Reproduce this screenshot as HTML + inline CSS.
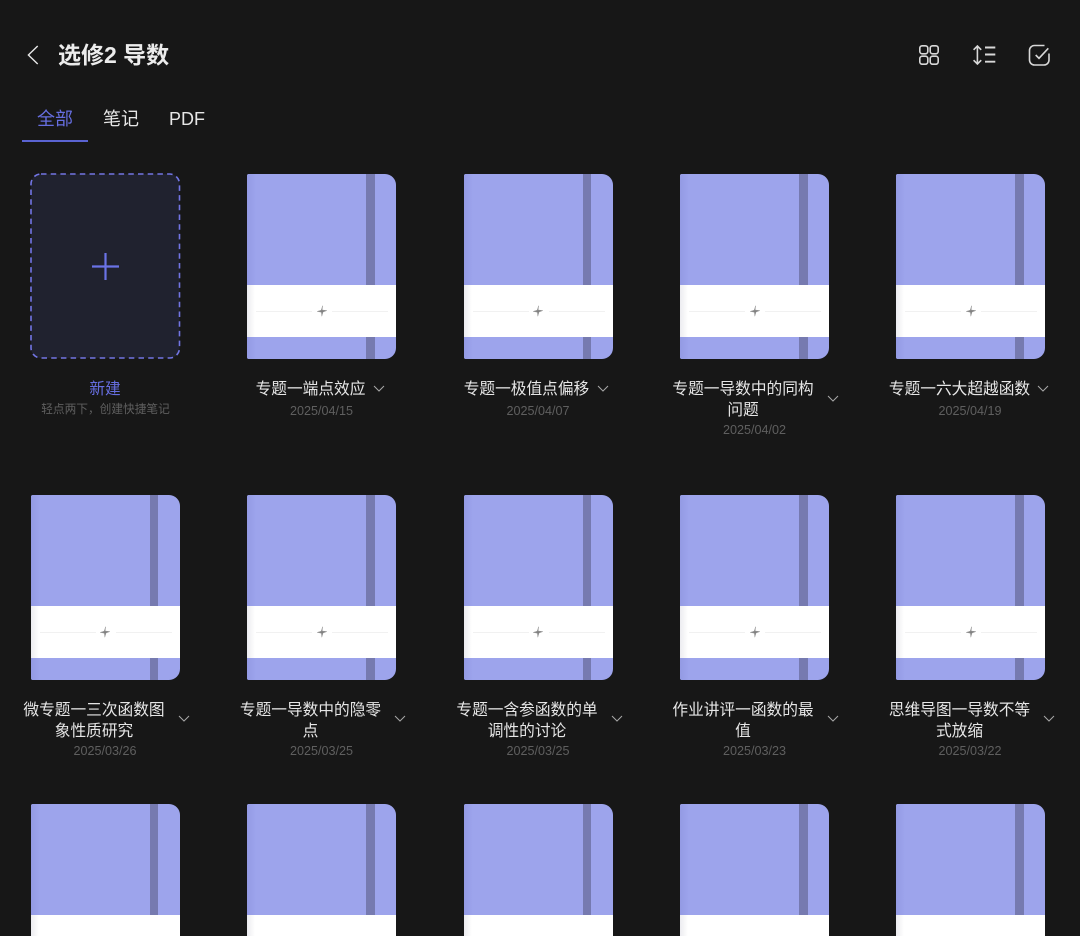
<!DOCTYPE html>
<html lang="zh"><head><meta charset="utf-8"><title>选修2 导数</title>
<style>
html,body{margin:0;padding:0;background:#171717;width:1080px;height:936px;overflow:hidden}
#p{position:relative;width:1080px;height:936px;overflow:hidden;font-family:"Liberation Sans","Noto Sans CJK SC",sans-serif}
.a{position:absolute;white-space:nowrap}
.b{position:absolute;width:149px;height:185px;background:#9da4ec;border-radius:2px 11px 11px 2px;overflow:hidden}
.b.r3{height:132px;border-radius:2px 11px 0 0}
.b i{position:absolute;display:block}
.b .s{left:0;top:0;width:9px;height:100%;background:linear-gradient(90deg,#939ae4,#9da4ec)}
.b .k{left:119px;top:0;width:8.5px;height:100%;background:#767ab0}
.b .w{left:0;top:111px;width:100%;height:52px;background:linear-gradient(90deg,#ececf0,#fff 8px)}
.b .l1{left:9px;top:137px;width:56px;height:1px;background:#f1f1f1}
.b .l2{left:85px;top:137px;width:56px;height:1px;background:#f1f1f1}
.b svg{position:absolute;left:68.5px;top:131px}
.t{position:absolute;transform:translateX(-50%);text-align:center;color:#e6e6e6;font-size:15.7px;line-height:21px;white-space:nowrap}
.d{position:absolute;transform:translateX(-50%);color:#5f5f5f;font-size:12.6px;line-height:16px;white-space:nowrap;font-family:"Liberation Sans",sans-serif}
.c{position:absolute;width:12px;height:7px}
</style></head><body><div id="p">

<svg class="a" style="left:24px;top:42px" width="18" height="26" viewBox="0 0 18 26"><path d="M13.7 4 4.4 13l9.3 9" fill="none" stroke="#e8e8e8" stroke-width="1.4"/></svg>
<div class="a" style="left:58px;top:39px;font-size:23px;line-height:32px;font-weight:700;color:#ececec">选修2 导数</div>

<svg class="a" style="left:915px;top:41px" width="28" height="28" viewBox="0 0 28 28" fill="none" stroke="#d8d8d8" stroke-width="1.6">
<rect x="4.8" y="4.8" width="8" height="8" rx="2.4"/><rect x="15.2" y="4.8" width="8" height="8" rx="2.4"/><rect x="4.8" y="15.2" width="8" height="8" rx="2.4"/><rect x="15.2" y="15.2" width="8" height="8" rx="2.4"/></svg>
<svg class="a" style="left:970px;top:41px" width="28" height="28" viewBox="0 0 28 28" fill="none" stroke="#d8d8d8" stroke-width="1.6">
<path d="M7.4 5v18M3.6 8.8 7.4 5l3.8 3.8M3.6 19.2 7.4 23l3.8-3.8"/><path d="M15 6.5h10.3M15 13.5h10.3M15 20.7h10.3" stroke-width="1.9"/></svg>
<svg class="a" style="left:1025px;top:41px" width="28" height="28" viewBox="0 0 28 28" fill="none" stroke="#d8d8d8" stroke-width="1.6">
<path d="M19.5 4.5H9.5a5 5 0 0 0-5 5v9.5a5 5 0 0 0 5 5h9.5a5 5 0 0 0 5-5v-6.5"/><path d="M10.7 14l3.3 3.3 9.3-10"/></svg>

<div class="a" style="left:37px;top:106px;font-size:18px;line-height:26px;color:#666ee0">全部</div>
<div class="a" style="left:103px;top:106px;font-size:18px;line-height:26px;color:#e6e6e6">笔记</div>
<div class="a" style="left:169px;top:106px;font-size:18px;line-height:26px;color:#e6e6e6">PDF</div>
<div class="a" style="left:21.5px;top:140px;width:66px;height:1.5px;background:#5a63d2"></div>

<svg class="a" style="left:30px;top:173px" width="151" height="186" viewBox="0 0 151 186">
<rect x="1" y="1" width="148.5" height="184" rx="10" fill="#20222f" stroke="#7275e4" stroke-width="1.6" stroke-dasharray="5.5 4.2"/>
<path d="M75.5 80v27M62 93.5h27" stroke="#6a73e6" stroke-width="2.2" fill="none"/></svg>
<div class="t" style="left:105px;top:379px;color:#666ee0">新建</div>
<div class="d" style="left:105.5px;top:402px;font-size:11.7px;font-family:'Liberation Sans','Noto Sans CJK SC',sans-serif;color:#5f5f5f">轻点两下，创建快捷笔记</div>

<!-- row 1 -->
<div class="b" style="left:247px;top:174px"><i class="s"></i><i class="k"></i><i class="w"></i><i class="l1"></i><i class="l2"></i><svg width="12" height="12" viewBox="0 0 12 12"><path d="M6.6.8 6.2 5 10.8 5.6 7 7 5.8 11.2 5.4 7.2 1.2 6.4 5.2 5.2Z" fill="#808080" stroke="#9a9a9a" stroke-width=".5"/></svg></div>
<div class="b" style="left:463.5px;top:174px"><i class="s"></i><i class="k"></i><i class="w"></i><i class="l1"></i><i class="l2"></i><svg width="12" height="12" viewBox="0 0 12 12"><path d="M6.6.8 6.2 5 10.8 5.6 7 7 5.8 11.2 5.4 7.2 1.2 6.4 5.2 5.2Z" fill="#808080" stroke="#9a9a9a" stroke-width=".5"/></svg></div>
<div class="b" style="left:680px;top:174px"><i class="s"></i><i class="k"></i><i class="w"></i><i class="l1"></i><i class="l2"></i><svg width="12" height="12" viewBox="0 0 12 12"><path d="M6.6.8 6.2 5 10.8 5.6 7 7 5.8 11.2 5.4 7.2 1.2 6.4 5.2 5.2Z" fill="#808080" stroke="#9a9a9a" stroke-width=".5"/></svg></div>
<div class="b" style="left:896px;top:174px"><i class="s"></i><i class="k"></i><i class="w"></i><i class="l1"></i><i class="l2"></i><svg width="12" height="12" viewBox="0 0 12 12"><path d="M6.6.8 6.2 5 10.8 5.6 7 7 5.8 11.2 5.4 7.2 1.2 6.4 5.2 5.2Z" fill="#808080" stroke="#9a9a9a" stroke-width=".5"/></svg></div>

<div class="t" style="left:310.5px;top:379px">专题一端点效应</div>
<div class="t" style="left:526.5px;top:379px">专题一极值点偏移</div>
<div class="t" style="left:743px;top:379px">专题一导数中的同构<br>问题</div>
<div class="t" style="left:959.5px;top:379px">专题一六大超越函数</div>
<div class="d" style="left:321.5px;top:403px">2025/04/15</div>
<div class="d" style="left:538px;top:403px">2025/04/07</div>
<div class="d" style="left:754.5px;top:422px">2025/04/02</div>
<div class="d" style="left:970px;top:403px">2025/04/19</div>
<svg class="c" style="left:373px;top:385px" viewBox="0 0 12 7"><path d="M1 1l5 5 5-5" fill="none" stroke="#a8a8a8" stroke-width="1"/></svg>
<svg class="c" style="left:597px;top:385px" viewBox="0 0 12 7"><path d="M1 1l5 5 5-5" fill="none" stroke="#a8a8a8" stroke-width="1"/></svg>
<svg class="c" style="left:827px;top:395px" viewBox="0 0 12 7"><path d="M1 1l5 5 5-5" fill="none" stroke="#a8a8a8" stroke-width="1"/></svg>
<svg class="c" style="left:1037px;top:385px" viewBox="0 0 12 7"><path d="M1 1l5 5 5-5" fill="none" stroke="#a8a8a8" stroke-width="1"/></svg>

<!-- row 2 -->
<div class="b" style="left:30.5px;top:494.5px"><i class="s"></i><i class="k"></i><i class="w"></i><i class="l1"></i><i class="l2"></i><svg width="12" height="12" viewBox="0 0 12 12"><path d="M6.6.8 6.2 5 10.8 5.6 7 7 5.8 11.2 5.4 7.2 1.2 6.4 5.2 5.2Z" fill="#808080" stroke="#9a9a9a" stroke-width=".5"/></svg></div>
<div class="b" style="left:247px;top:494.5px"><i class="s"></i><i class="k"></i><i class="w"></i><i class="l1"></i><i class="l2"></i><svg width="12" height="12" viewBox="0 0 12 12"><path d="M6.6.8 6.2 5 10.8 5.6 7 7 5.8 11.2 5.4 7.2 1.2 6.4 5.2 5.2Z" fill="#808080" stroke="#9a9a9a" stroke-width=".5"/></svg></div>
<div class="b" style="left:463.5px;top:494.5px"><i class="s"></i><i class="k"></i><i class="w"></i><i class="l1"></i><i class="l2"></i><svg width="12" height="12" viewBox="0 0 12 12"><path d="M6.6.8 6.2 5 10.8 5.6 7 7 5.8 11.2 5.4 7.2 1.2 6.4 5.2 5.2Z" fill="#808080" stroke="#9a9a9a" stroke-width=".5"/></svg></div>
<div class="b" style="left:680px;top:494.5px"><i class="s"></i><i class="k"></i><i class="w"></i><i class="l1"></i><i class="l2"></i><svg width="12" height="12" viewBox="0 0 12 12"><path d="M6.6.8 6.2 5 10.8 5.6 7 7 5.8 11.2 5.4 7.2 1.2 6.4 5.2 5.2Z" fill="#808080" stroke="#9a9a9a" stroke-width=".5"/></svg></div>
<div class="b" style="left:896px;top:494.5px"><i class="s"></i><i class="k"></i><i class="w"></i><i class="l1"></i><i class="l2"></i><svg width="12" height="12" viewBox="0 0 12 12"><path d="M6.6.8 6.2 5 10.8 5.6 7 7 5.8 11.2 5.4 7.2 1.2 6.4 5.2 5.2Z" fill="#808080" stroke="#9a9a9a" stroke-width=".5"/></svg></div>

<div class="t" style="left:94px;top:699.5px">微专题一三次函数图<br>象性质研究</div>
<div class="t" style="left:310.5px;top:699.5px">专题一导数中的隐零<br>点</div>
<div class="t" style="left:527px;top:699.5px">专题一含参函数的单<br>调性的讨论</div>
<div class="t" style="left:743px;top:699.5px">作业讲评一函数的最<br>值</div>
<div class="t" style="left:959.5px;top:699.5px">思维导图一导数不等<br>式放缩</div>
<div class="d" style="left:105px;top:743px">2025/03/26</div>
<div class="d" style="left:321.5px;top:743px">2025/03/25</div>
<div class="d" style="left:538px;top:743px">2025/03/25</div>
<div class="d" style="left:754.5px;top:743px">2025/03/23</div>
<div class="d" style="left:970px;top:743px">2025/03/22</div>
<svg class="c" style="left:178px;top:715px" viewBox="0 0 12 7"><path d="M1 1l5 5 5-5" fill="none" stroke="#a8a8a8" stroke-width="1"/></svg>
<svg class="c" style="left:394px;top:715px" viewBox="0 0 12 7"><path d="M1 1l5 5 5-5" fill="none" stroke="#a8a8a8" stroke-width="1"/></svg>
<svg class="c" style="left:611px;top:715px" viewBox="0 0 12 7"><path d="M1 1l5 5 5-5" fill="none" stroke="#a8a8a8" stroke-width="1"/></svg>
<svg class="c" style="left:827px;top:715px" viewBox="0 0 12 7"><path d="M1 1l5 5 5-5" fill="none" stroke="#a8a8a8" stroke-width="1"/></svg>
<svg class="c" style="left:1043px;top:715px" viewBox="0 0 12 7"><path d="M1 1l5 5 5-5" fill="none" stroke="#a8a8a8" stroke-width="1"/></svg>

<!-- row 3 -->
<div class="b r3" style="left:30.5px;top:804px"><i class="s"></i><i class="k"></i><i class="w"></i></div>
<div class="b r3" style="left:247px;top:804px"><i class="s"></i><i class="k"></i><i class="w"></i></div>
<div class="b r3" style="left:463.5px;top:804px"><i class="s"></i><i class="k"></i><i class="w"></i></div>
<div class="b r3" style="left:680px;top:804px"><i class="s"></i><i class="k"></i><i class="w"></i></div>
<div class="b r3" style="left:896px;top:804px"><i class="s"></i><i class="k"></i><i class="w"></i></div>

</div></body></html>
